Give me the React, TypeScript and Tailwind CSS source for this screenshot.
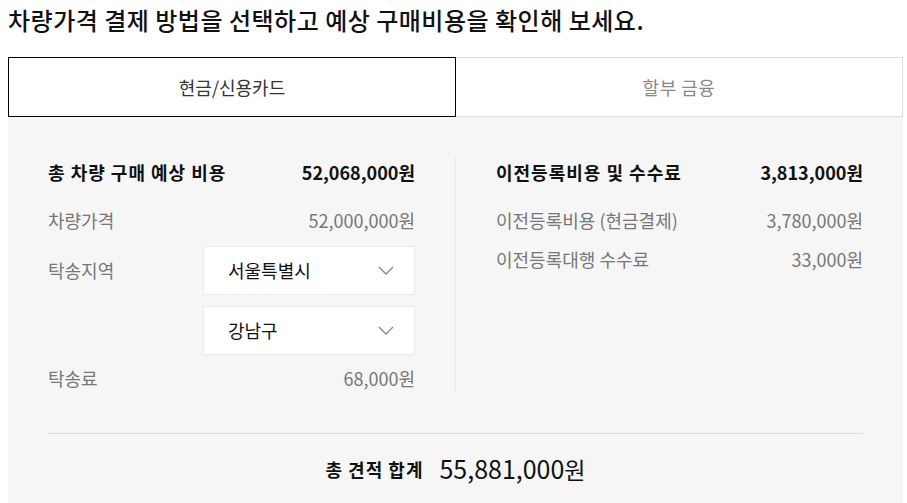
import { useState } from "react";

const font = { fontFamily: '"Noto Sans CJK KR", "Noto Sans", sans-serif' };

function Chevron() {
  return (
    <svg width="16" height="9" viewBox="0 0 16 9" fill="none">
      <polyline points="1,1 8,8 15,1" stroke="#888" strokeWidth="1.4" />
    </svg>
  );
}

function Select({ value }: { value: string }) {
  return (
    <div className="flex h-[49px] w-[212px] items-center justify-between border border-[#ebebeb] bg-white pl-6 pr-5">
      <span className="text-[18px] text-[#111]">{value}</span>
      <Chevron />
    </div>
  );
}

function Row({ label, value, className = "" }: { label: string; value: string; className?: string }) {
  return (
    <div className={`flex h-[30px] items-center justify-between text-[18px] text-[#777] ${className}`}>
      <span>{label}</span>
      <span>{value}</span>
    </div>
  );
}

function Heading({ label, value }: { label: string; value: string }) {
  return (
    <div className="flex h-[30px] items-center justify-between text-[18px] font-bold text-[#111]">
      <span className="tracking-[1px]">{label}</span>
      <span>{value}</span>
    </div>
  );
}

export default function App() {
  const [tab, setTab] = useState(0);

  return (
    <div className="min-h-screen bg-white pl-2 pr-1 pt-[2px]" style={font}>
      <h1 className="text-[24px] font-medium leading-[36px] tracking-[0.5px] text-[#111]">
        차량가격 결제 방법을 선택하고 예상 구매비용을 확인해 보세요.
      </h1>

      {/* 탭 */}
      <div className="mt-[19px] flex h-[60px]">
        <button
          onClick={() => setTab(0)}
          className={`flex-1 text-[18px] ${tab === 0 ? "border border-black text-[#333]" : "border border-[#ddd] text-[#888]"}`}
        >
          현금/신용카드
        </button>
        <button
          onClick={() => setTab(1)}
          className={`flex-1 text-[18px] tracking-[0.5px] ${tab === 1 ? "border border-black text-[#333]" : "border border-l-0 border-[#ddd] text-[#888]"}`}
        >
          할부 금융
        </button>
      </div>

      {/* 비용 패널 */}
      <div className="bg-[#f6f6f6] px-10 pt-10 pb-10">
        <div className="flex">
          <div className="flex-1 border-r border-[#e9e9e9] pr-10">
            <Heading label="총 차량 구매 예상 비용" value="52,068,000원" />
            <Row label="차량가격" value="52,000,000원" className="mt-[18px]" />
            <div className="mt-[11px] flex items-center justify-between">
              <span className="text-[18px] text-[#777]">탁송지역</span>
              <Select value="서울특별시" />
            </div>
            <div className="mt-[11px] flex justify-end">
              <Select value="강남구" />
            </div>
            <Row label="탁송료" value="68,000원" className="mt-[8px]" />
          </div>

          <div className="flex-1 pl-10">
            <Heading label="이전등록비용 및 수수료" value="3,813,000원" />
            <Row label="이전등록비용 (현금결제)" value="3,780,000원" className="mt-[18px]" />
            <Row label="이전등록대행 수수료" value="33,000원" className="mt-[9px]" />
          </div>
        </div>

        <div className="mt-10 border-t border-[#dcdcdc] pt-[17px]">
          <div className="flex h-[36px] items-center justify-center gap-4 text-[#111]">
            <span className="text-[18px] font-bold tracking-[1px]">총 견적 합계</span>
            <span className="text-[25px]">
              55,881,000<span className="text-[23px]">원</span>
            </span>
          </div>
        </div>
      </div>
    </div>
  );
}
